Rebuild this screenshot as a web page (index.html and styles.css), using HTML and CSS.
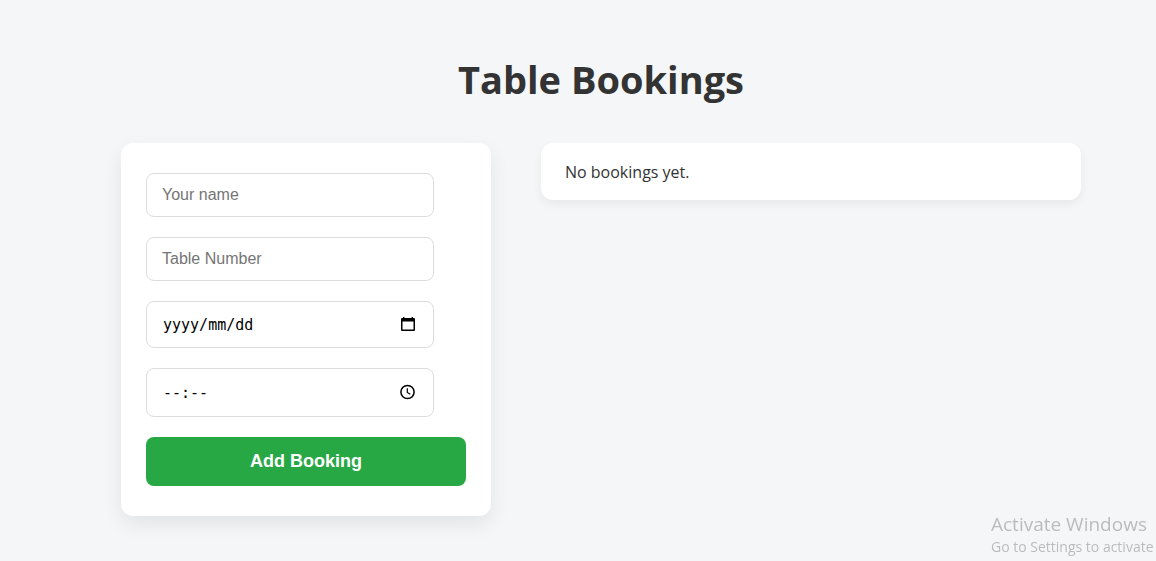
FILE: index.html
```html
<!DOCTYPE html>
<html lang="en">
<head>
  <meta charset="utf-8">
  <meta name="viewport" content="width=device-width, initial-scale=1">
  <title>Table Bookings</title>
  <link rel="stylesheet" href="styles.css">
</head>
<body class="page">
  <main class="container">
    <h1 class="title">Table Bookings</h1>
    <div class="content">
      <form class="booking-form">
        <input class="field" type="text" aria-label="Your name" placeholder="Your name">
        <input class="field" type="text" aria-label="Table Number" placeholder="Table Number">
        <div class="picker picker-date">
          <input class="picker-input" type="text" aria-label="Date" placeholder="yyyy/mm/dd">
          <button class="picker-button" type="button" aria-label="Choose date">
            <svg class="picker-icon" viewBox="0 0 16 16" aria-hidden="true">
              <path fill="currentColor" fill-rule="evenodd" d="M3 1h1.500v1h7V1H13v1h1q1 0 1 1v11q0 1-1 1H2q-1 0-1-1V3q0-1 1-1h1zM2.500 5.500v8h11v-8z"/>
            </svg>
          </button>
        </div>
        <div class="picker picker-time">
          <input class="picker-input" type="text" aria-label="Time" placeholder="--:--">
          <button class="picker-button" type="button" aria-label="Choose time">
            <svg class="picker-icon" viewBox="0 0 16 16" aria-hidden="true">
              <circle cx="7.500" cy="8" r="6.600" fill="none" stroke="currentColor" stroke-width="1.500"/>
              <path d="M7.300 4.300v4.200l3 1.800" fill="none" stroke="currentColor" stroke-width="1.200"/>
            </svg>
          </button>
        </div>
        <button class="submit" type="submit">Add Booking</button>
      </form>
      <section class="bookings">
        <p class="empty">No bookings yet.</p>
      </section>
    </div>
  </main>
  <aside class="watermark">
    <p class="watermark-title">Activate Windows</p>
    <p class="watermark-text">Go to Settings to activate</p>
  </aside>
</body>
</html>
```

FILE: styles.css
```css
* {
  box-sizing: border-box;
}

.page {
  margin: 0;
  padding: 52px 24px 40px 70px;
  background: #f4f6f8;
  color: #333;
  font-family: "Segoe UI", "Open Sans", "Noto Sans", sans-serif;
  font-size: 16px;
}

.container {
  max-width: 960px;
  margin: 0 auto;
}

.title {
  margin: 0 0 37px;
  font-size: 38px;
  line-height: 54px;
  text-align: center;
}

.content {
  display: flex;
  flex-wrap: wrap;
  align-items: flex-start;
  gap: 50px;
}

.booking-form {
  display: flex;
  flex-direction: column;
  align-items: flex-start;
  gap: 20px;
  width: 370px;
  padding: 30px 25px;
  border-radius: 12px;
  background: #fff;
  box-shadow: 0 8px 20px rgba(0, 0, 0, 0.08);
}

.field,
.picker {
  width: 90%;
  border: 1px solid #ddd;
  border-radius: 8px;
  background: #fff;
}

.field {
  height: 44px;
  padding: 12px 15px;
  font-family: Arial, "Liberation Sans", sans-serif;
  font-size: 16px;
}

.field::placeholder {
  color: #757575;
}

.picker {
  display: flex;
  align-items: center;
  padding: 0 15px;
}

.picker-date {
  height: 47px;
}

.picker-time {
  height: 49px;
}

.picker-input {
  flex: 1;
  min-width: 0;
  padding: 0 0 0 1px;
  border: 0;
  background: none;
  font-family: Consolas, "DejaVu Sans Mono", monospace;
  font-size: 15px;
}

.picker-input::placeholder {
  color: #000;
}

.picker-button {
  padding: 0 2px 2px 0;
  border: 0;
  background: none;
  color: #000;
  cursor: pointer;
}

.picker-icon {
  display: block;
  width: 16px;
  height: 16px;
}

.submit {
  width: 100%;
  padding: 14px;
  border: 0;
  border-radius: 8px;
  background: #28a745;
  color: #fff;
  font-family: Arial, "Liberation Sans", sans-serif;
  font-size: 18px;
  font-weight: bold;
  line-height: 21px;
  cursor: pointer;
}

.bookings {
  flex: 1;
}

.empty {
  margin: 0;
  padding: 19px 24px 17px;
  border-radius: 12px;
  background: #fff;
  box-shadow: 0 4px 10px rgba(0, 0, 0, 0.06);
  line-height: 21px;
}

.watermark {
  position: fixed;
  right: 0;
  bottom: 3px;
  width: 165px;
  color: #bbbcbd;
  white-space: nowrap;
}

.watermark-title,
.watermark-text {
  margin: 0;
}

.watermark-title {
  font-size: 19px;
  line-height: 24px;
}

.watermark-text {
  font-size: 14px;
  line-height: 22px;
}
```
